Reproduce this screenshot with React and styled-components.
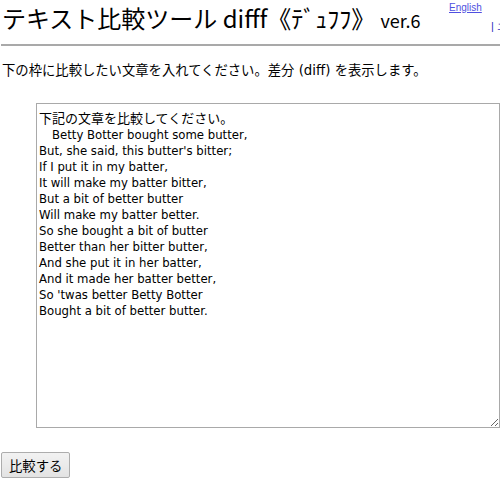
import React from "react";
import styled, { createGlobalStyle } from "styled-components";

const Global = createGlobalStyle`
  html, body { margin: 0; padding: 0; overflow: hidden; background: #fff; }
  body { font-family: "Noto Sans CJK JP", "Noto Sans", sans-serif; color: #000; }
`;

const Page = styled.div`
  width: 500px;
  overflow: hidden;
  padding: 0 0 0 1px;
  box-sizing: border-box;
`;

const Header = styled.div`
  display: flex;
  justify-content: space-between;
  align-items: flex-start;
  width: 540px;
  height: 44px;
`;

const Title = styled.h1`
  margin: 0;
  padding: 0 0 0 1px;
  font-weight: normal;
  font-size: 24px;
  line-height: 36px;
  white-space: nowrap;
  font-family: "Noto Sans CJK JP", sans-serif;
`;

const Ver = styled.span`
  font-size: 18px;
  margin-left: 5px;
`;

const Links = styled.div`
  display: flex;
  flex-direction: column;
  width: 92px;
  font-size: 10px;
  line-height: 14px;
  font-family: "Liberation Sans", Arial, sans-serif;
  padding-top: 1px;
`;

const Link = styled.a`
  color: #5050e0;
  text-decoration: underline;
`;

const Sep = styled.span`
  margin-left: 42px;
  margin-top: 4px;
  font-size: 11px;
  color: #3030c0;
  white-space: nowrap;
`;

const Rule = styled.hr`
  margin: 0;
  border: none;
  border-top: 2px solid #a9a9a9;
  height: 0;
`;

const Lead = styled.p`
  margin: 15px 0 0 1px;
  font-size: 13.33px;
  line-height: 19px;
  font-family: "DejaVu Sans", "Noto Sans CJK JP", sans-serif;
`;

const Area = styled.textarea`
  display: block;
  box-sizing: border-box;
  margin: 23px 0 0 35px;
  width: 464px;
  height: 325px;
  border: 1px solid #a9a9a9;
  padding: 7px 2px 2px 2px;
  font-family: "DejaVu Sans Condensed", "DejaVu Sans", Tahoma, "Noto Sans CJK JP", sans-serif;
  font-stretch: semi-condensed;
  font-size: 13px;
  line-height: 16px;
  color: #000;
  resize: both;
  outline: none;
`;

const Button = styled.button`
  display: block;
  margin: 24px 0 0 0;
  height: 26px;
  padding: 0 7px;
  font-family: "Noto Sans CJK JP", sans-serif;
  font-size: 13.33px;
  color: #000;
  border: 1px solid #adadad;
  border-radius: 2px;
  background: linear-gradient(#f2f2f2, #e3e3e3);
`;

const initial = `下記の文章を比較してください。
\u3000Betty Botter bought some butter,
But, she said, this butter's bitter;
If I put it in my batter,
It will make my batter bitter,
But a bit of better butter
Will make my batter better.
So she bought a bit of butter
Better than her bitter butter,
And she put it in her batter,
And it made her batter better,
So 'twas better Betty Botter
Bought a bit of better butter.`;

export default function App() {
  return (
    <Page>
      <Global />
      <Header>
        <Title>
          テキスト比較ツール difff《ﾃﾞｭﾌﾌ》<Ver>ver.6</Ver>
        </Title>
        <Links>
          <Link href="#">English</Link>
          <Sep>| エラー</Sep>
        </Links>
      </Header>
      <Rule />
      <Lead>下の枠に比較したい文章を入れてください。差分 (diff) を表示します。</Lead>
      <Area defaultValue={initial} />
      <Button>比較する</Button>
    </Page>
  );
}
